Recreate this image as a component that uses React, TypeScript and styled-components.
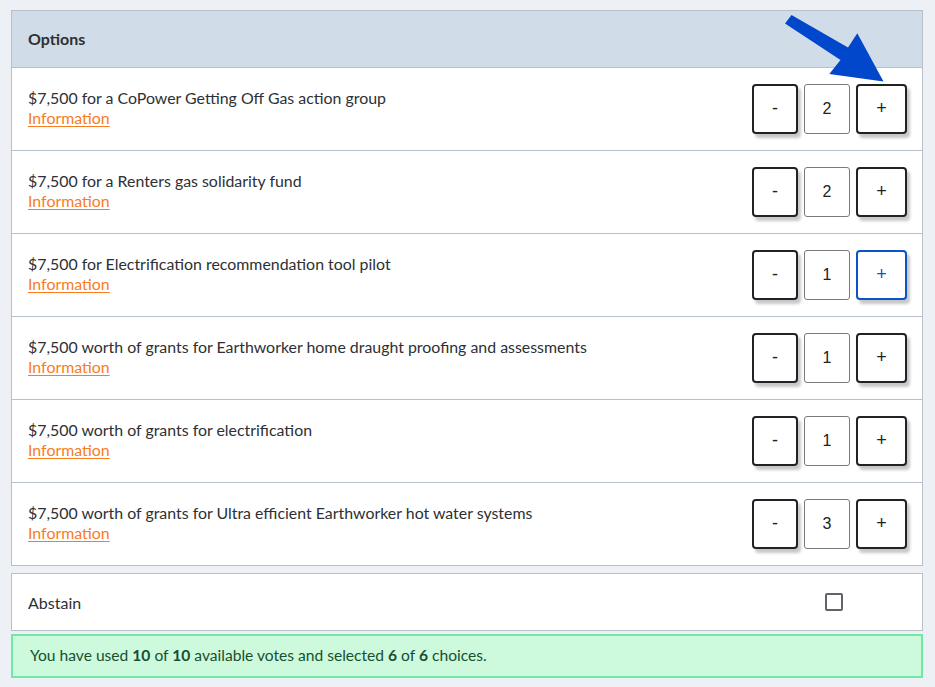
import React from "react";
import styled, { createGlobalStyle } from "styled-components";

interface Option {
  title: string;
  votes: number;
  focused?: boolean;
}

const options: Option[] = [
  { title: "$7,500 for a CoPower Getting Off Gas action group", votes: 2 },
  { title: "$7,500 for a Renters gas solidarity fund", votes: 2 },
  { title: "$7,500 for Electrification recommendation tool pilot", votes: 1, focused: true },
  { title: "$7,500 worth of grants for Earthworker home draught proofing and assessments", votes: 1 },
  { title: "$7,500 worth of grants for electrification", votes: 1 },
  { title: "$7,500 worth of grants for Ultra efficient Earthworker hot water systems", votes: 3 },
];

export default function App() {
  return (
    <Page>
      <GlobalStyle />
      <Panel>
        <Header>Options</Header>
        {options.map((o) => (
          <Row key={o.title}>
            <Label>
              <span>{o.title}</span>
              <InfoLink href="#">Information</InfoLink>
            </Label>
            <Controls>
              <StepButton>-</StepButton>
              <Count>{o.votes}</Count>
              <StepButton wide focused={o.focused}>+</StepButton>
            </Controls>
          </Row>
        ))}
        <Arrow width="110" height="75" viewBox="780 10 110 75">
          <polygon
            points="791.5,15 848,47.5 857.3,33.3 883.5,81.5 829.3,74 840.5,60 785,23.5"
            fill="#0047cc"
          />
        </Arrow>
      </Panel>
      <AbstainBox>
        <span>Abstain</span>
        <CheckCell>
          <Check />
        </CheckCell>
      </AbstainBox>
      <Status>
        You have used <b>10</b> of <b>10</b> available votes and selected <b>6</b> of <b>6</b> choices.
      </Status>
    </Page>
  );
}

const GlobalStyle = createGlobalStyle`
  body {
    margin: 0;
    background: #edf1f5;
    font-family: Lato, "Open Sans", sans-serif;
    color: #2d3035;
  }
`;

const Page = styled.div`
  padding: 10px 0 0 11px;
  width: 912px;
  display: flex;
  flex-direction: column;
`;

const Panel = styled.div`
  position: relative;
  border: 1px solid #b7c0cb;
  background: #fff;
`;

const Header = styled.div`
  background: #d0dce7;
  height: 54px;
  display: flex;
  align-items: center;
  padding: 0 16px 2px;
  font-size: 16px;
  font-weight: 700;
  border-bottom: 1px solid #b7c0cb;
`;

const Row = styled.div`
  height: 82px;
  display: flex;
  align-items: center;
  justify-content: space-between;
  padding: 0 15px 0 16px;
  border-bottom: 1px solid #b7c0cb;
  &:last-of-type {
    border-bottom: none;
  }
`;

const Label = styled.div`
  display: flex;
  flex-direction: column;
  font-size: 15.9px;
  line-height: 20px;
  margin-top: -3px;
`;

const InfoLink = styled.a`
  color: #f97c1e;
  text-decoration: underline;
  text-underline-offset: 2px;
  width: fit-content;
`;

const Controls = styled.div`
  display: flex;
  gap: 6px;
  margin-top: -1px;
`;

const StepButton = styled.button<{ wide?: boolean; focused?: boolean }>`
  width: ${(p) => (p.wide ? 51 : 46)}px;
  height: 50px;
  background: #fff;
  border: 2px solid ${(p) => (p.focused ? "#0a54c9" : "#1f2328")};
  border-radius: 4px;
  box-shadow: 3px 4px 3px rgba(0, 0, 0, 0.22);
  font-family: "Liberation Sans", Arial, sans-serif;
  font-size: 18px;
  color: ${(p) => (p.focused ? "#0a54c9" : "#222")};
  padding: 0;
`;

const Count = styled.div`
  width: 46px;
  height: 50px;
  box-sizing: border-box;
  border: 1px solid #7a7a7a;
  border-radius: 3px;
  display: flex;
  align-items: center;
  justify-content: center;
  font-family: "Liberation Sans", Arial, sans-serif;
  font-size: 16px;
  color: #222;
`;

const Arrow = styled.svg`
  position: absolute;
  left: 768px;
  top: -1px;
  pointer-events: none;
`;

const AbstainBox = styled.div`
  margin-top: 7px;
  height: 56px;
  background: #fff;
  border: 1px solid #b7c0cb;
  display: flex;
  align-items: center;
  justify-content: space-between;
  padding: 0 16px;
  font-size: 16px;
`;

const CheckCell = styled.div`
  width: 145px;
  display: flex;
  justify-content: center;
`;

const Check = styled.div`
  width: 14px;
  height: 14px;
  border: 2px solid #5f646a;
  border-radius: 2px;
`;

const Status = styled.div`
  margin-top: 3px;
  height: 40px;
  line-height: 39px;
  background: #cdf9dd;
  border: 2px solid #6eeaa6;
  padding: 0 17px;
  font-size: 15.6px;
  color: #17502f;
  b {
    font-weight: 700;
  }
`;
